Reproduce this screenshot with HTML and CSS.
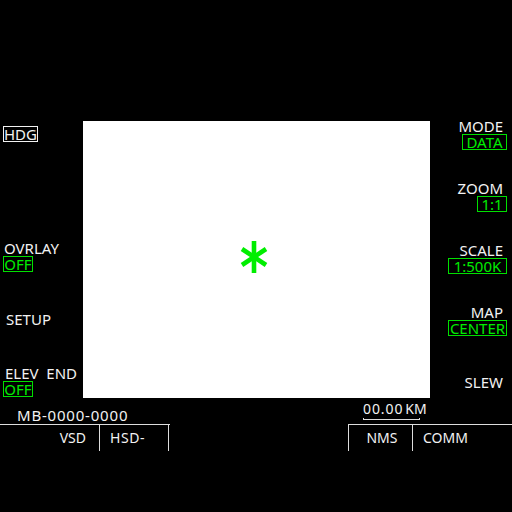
FILE: index.html
```html
<!DOCTYPE html>
<html>
<head>
<meta charset="utf-8">
<link rel="stylesheet" href="styles.css">
</head>
<body>
<div class="mfd">
  <div class="main">
    <div class="side left">
      <div class="lbl hdg"><div class="box wbox w35">HDG</div></div>
      <div class="lbl ovrlay"><div class="t">OVRLAY</div><div class="box gbox w30">OFF</div></div>
      <div class="lbl setup"><div class="t">SETUP</div></div>
      <div class="lbl elev"><div class="t">ELEV&nbsp;&nbsp;END</div><div class="box gbox w30">OFF</div></div>
    </div>
    <div class="display">
      <svg class="cursor" width="28" height="32" viewBox="0 0 28 32">
        <line x1="14" y1="0" x2="14" y2="32" stroke="#00ee00" stroke-width="4.6"/>
        <line x1="2" y1="8" x2="26" y2="24" stroke="#00ee00" stroke-width="4.6"/>
        <line x1="26" y1="8" x2="2" y2="24" stroke="#00ee00" stroke-width="4.6"/>
      </svg>
    </div>
    <div class="side right">
      <div class="lbl mode"><div class="t">MODE</div><div class="box gbox w45">DATA</div></div>
      <div class="lbl zoom"><div class="t">ZOOM</div><div class="box gbox w30">1:1</div></div>
      <div class="lbl scale"><div class="t">SCALE</div><div class="box gbox w59">1:500K</div></div>
      <div class="lbl map"><div class="t">MAP</div><div class="box gbox w59">CENTER</div></div>
      <div class="lbl slew"><div class="t">SLEW</div></div>
    </div>
  </div>
  <div class="info">
    <div class="mb">MB-0000-0000</div>
    <div class="range"><span class="num">00.00</span><span class="km">KM</span><div class="bar"></div></div>
  </div>
  <div class="buttons">
    <div class="group lgroup">
      <div class="btn vsd">VSD</div>
      <div class="btn hsd">HSD-</div>
    </div>
    <div class="group rgroup">
      <div class="btn nms">NMS</div>
      <div class="btn comm">COMM</div>
    </div>
  </div>
</div>
</body>
</html>
```
FILE: styles.css
```css
html, body {
  margin: 0;
  padding: 0;
  background: #000;
  width: 512px;
  height: 512px;
  overflow: hidden;
}
.mfd {
  font-family: "Noto Sans", sans-serif;
  font-size: 15px;
  color: #f2f2f2;
  padding-top: 121px;
}
.main {
  display: grid;
  grid-template-columns: 83px 347px 82px;
  height: 277px;
}
.display {
  background: #fff;
  display: flex;
  align-items: center;
  justify-content: center;
}
.cursor {
  margin: 0 5px 6px 0;
}
.side {
  display: flex;
  flex-direction: column;
}
.lbl {
  display: flex;
  flex-direction: column;
}
.t {
  line-height: 16px;
  height: 16px;
}
.box {
  box-sizing: border-box;
  height: 16px;
  line-height: 14px;
  text-align: center;
  white-space: nowrap;
}
.wbox {
  border: 1px solid #f2f2f2;
}
.gbox {
  border: 1px solid #00e000;
  color: #00ec00;
}
.w30 { width: 30px; }
.w35 { width: 35px; }
.w45 { width: 45px; }
.w59 { width: 59px; }

.left {
  padding-left: 3px;
  align-items: flex-start;
}
.left .lbl { align-items: flex-start; }
.hdg { margin-top: 5px; }
.ovrlay { margin-top: 98px; }
.ovrlay .t { padding-left: 1px; }
.setup { margin-top: 39px; }
.setup .t { padding-left: 3px; }
.elev { margin-top: 38px; }
.elev .t { padding-left: 2px; }

.right {
  align-items: flex-end;
  padding-right: 5px;
}
.right .lbl { align-items: flex-end; }
.right .t { padding-right: 4px; }
.mode { margin-top: -3px; }
.zoom { margin-top: 30px; }
.scale { margin-top: 30px; }
.map { margin-top: 30px; }
.slew { margin-top: 38px; }

.info {
  display: flex;
  justify-content: space-between;
  height: 26px;
}
.mb {
  padding: 9px 0 0 17px;
  line-height: 16px;
  letter-spacing: 0.8px;
}
.range {
  width: 66px;
  margin-right: 83px;
  padding-top: 3px;
  line-height: 16px;
  font-size: 14px;
  white-space: nowrap;
}
.num { letter-spacing: 0.9px; }
.km { margin-left: 2px; }
.bar {
  margin: 1px 0 0 0;
  width: 57px;
  height: 2px;
  box-sizing: border-box;
  border-bottom: 1px solid #ddd;
  border-left: 1px solid #ddd;
  border-right: 1px solid #ddd;
}
.buttons {
  display: flex;
  justify-content: space-between;
  font-size: 14px;
}
.group {
  display: flex;
  border-top: 1px solid #ddd;
  height: 26px;
}
.btn {
  line-height: 26px;
}
.lgroup { width: 170px; }
.vsd {
  width: 100px;
  box-sizing: border-box;
  text-align: right;
  padding-right: 13px;
  border-right: 1px solid #ddd;
}
.hsd {
  width: 69px;
  box-sizing: border-box;
  padding-left: 10px;
  letter-spacing: 0.6px;
  border-right: 1px solid #ddd;
}
.rgroup { width: 164px; }
.nms {
  width: 65px;
  box-sizing: border-box;
  text-align: center;
  padding-left: 3px;
  border-left: 1px solid #ddd;
  border-right: 1px solid #ddd;
}
.comm {
  padding-left: 10px;
}
```
